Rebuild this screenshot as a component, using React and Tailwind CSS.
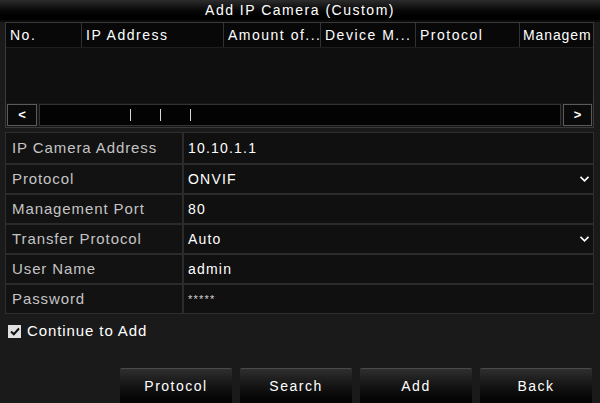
import { useState } from "react"

const columns = [
  { label: "No.", w: "w-[75px]" },
  { label: "IP Address", w: "w-[142px]" },
  { label: "Amount of...", w: "w-[97px]" },
  { label: "Device M...", w: "w-[95px]" },
  { label: "Protocol", w: "w-[104px]" },
  { label: "Managem", w: "w-[74px]", tight: true },
]

const fields = [
  { label: "IP Camera Address", value: "10.10.1.1" },
  { label: "Protocol", value: "ONVIF", select: true },
  { label: "Management Port", value: "80" },
  { label: "Transfer Protocol", value: "Auto", select: true },
  { label: "User Name", value: "admin" },
  { label: "Password", value: "*****", password: true },
]

function Chevron() {
  return (
    <svg width="9" height="6" viewBox="0 0 9 6" className="mr-[4px]">
      <path d="M0.5 0.8 L4.5 4.8 L8.5 0.8" fill="none" stroke="#ffffff" strokeWidth="1.6" />
    </svg>
  )
}

function ActionButton({ children }) {
  return (
    <button className="flex h-[35px] w-[112px] items-center justify-center rounded-t-[2px] border-t border-[#4a4a4a] bg-gradient-to-b from-[#2f2f2f] via-[#141414] to-[#030303] text-[14px] tracking-[1.5px] text-white">
      {children}
    </button>
  )
}

export default function App() {
  const [keepAdding, setKeepAdding] = useState(true)

  return (
    <div className="relative flex h-[403px] w-[600px] flex-col overflow-hidden bg-[#1a1a1a] font-[family-name:Liberation_Sans,Arial,sans-serif] text-white">
      <div className="flex h-[20px] items-center justify-center bg-gradient-to-b from-[#2c2c2c] to-[#000000] text-[14px] tracking-[1.5px]">
        Add IP Camera (Custom)
      </div>

      <div className="h-[2px] bg-[#0b0b0b]" />

      <div className="mx-[5px] w-[589px] border border-[#3a3a3a] bg-[#0d0d0d]">
        <div className="flex h-[24px] overflow-hidden bg-[#080808]">
          {columns.map((c, i) => (
            <div
              key={c.label}
              className={`${c.w} flex shrink-0 items-center overflow-hidden whitespace-nowrap text-[14px] ${c.tight ? "pl-[3px] tracking-[0.9px]" : "px-[4px] tracking-[1.5px]"} ${i > 0 ? "border-l border-[#333333]" : ""}`}
            >
              {c.label}
            </div>
          ))}
        </div>
        <div className="h-[56px] border-t border-[#1e1e1e] bg-[#0f0f0f]" />
        <div className="flex h-[24px] items-center gap-[2px] bg-[#161616] px-px">
          <button className="flex h-[22px] w-[30px] items-center justify-center border border-[#5a5a5a] bg-[#0a0a0a] text-[13px] font-bold">
            &lt;
          </button>
          <div className="flex h-[22px] flex-1 items-center border border-[#333333] bg-[#030303] pl-[90px]">
            <div className="flex gap-[29px]">
              <span className="h-[12px] w-px bg-[#d8d8d8]" />
              <span className="h-[12px] w-px bg-[#d8d8d8]" />
              <span className="h-[12px] w-px bg-[#d8d8d8]" />
            </div>
          </div>
          <button className="flex h-[22px] w-[29px] items-center justify-center border border-[#5a5a5a] bg-[#0a0a0a] text-[13px] font-bold">
            &gt;
          </button>
        </div>
      </div>

      <div className="mx-[5px] mt-[4px] w-[589px] border border-[#2e2e2e] bg-[#101010]">
        {fields.map((f, i) => (
          <div key={f.label} className={`flex h-[30px] ${i > 0 ? "border-t-2 border-[#2b2b2b]" : ""}`}>
            <div className="flex w-[178px] items-center border-r-2 border-[#2b2b2b] bg-[#121212] pl-[6px] text-[15px] tracking-[0.9px] text-[#c4c4c4]">
              {f.label}
            </div>
            <div className="flex flex-1 items-center justify-between pl-[4px] text-[14px] tracking-[1.2px] text-white">
              <span className={f.password ? "text-[11px] text-[#d0d0d0]" : ""}>{f.value}</span>
              {f.select && <Chevron />}
            </div>
          </div>
        ))}
      </div>

      <label className="mt-[6px] flex items-center gap-[6px] pl-[8px] text-[15px] tracking-[0.9px]">
        <span
          onClick={() => setKeepAdding(!keepAdding)}
          className="flex h-[13px] w-[13px] items-center justify-center bg-[#e0e0e0]"
        >
          {keepAdding && (
            <svg width="10" height="9" viewBox="0 0 10 9">
              <path d="M1 4.5 L3.8 7.2 L9 1.5" fill="none" stroke="#111111" strokeWidth="2" />
            </svg>
          )}
        </span>
        Continue to Add
      </label>

      <div className="mt-auto flex justify-end gap-[8px] pr-[8px]">
        <ActionButton>Protocol</ActionButton>
        <ActionButton>Search</ActionButton>
        <ActionButton>Add</ActionButton>
        <ActionButton>Back</ActionButton>
      </div>
    </div>
  )
}
